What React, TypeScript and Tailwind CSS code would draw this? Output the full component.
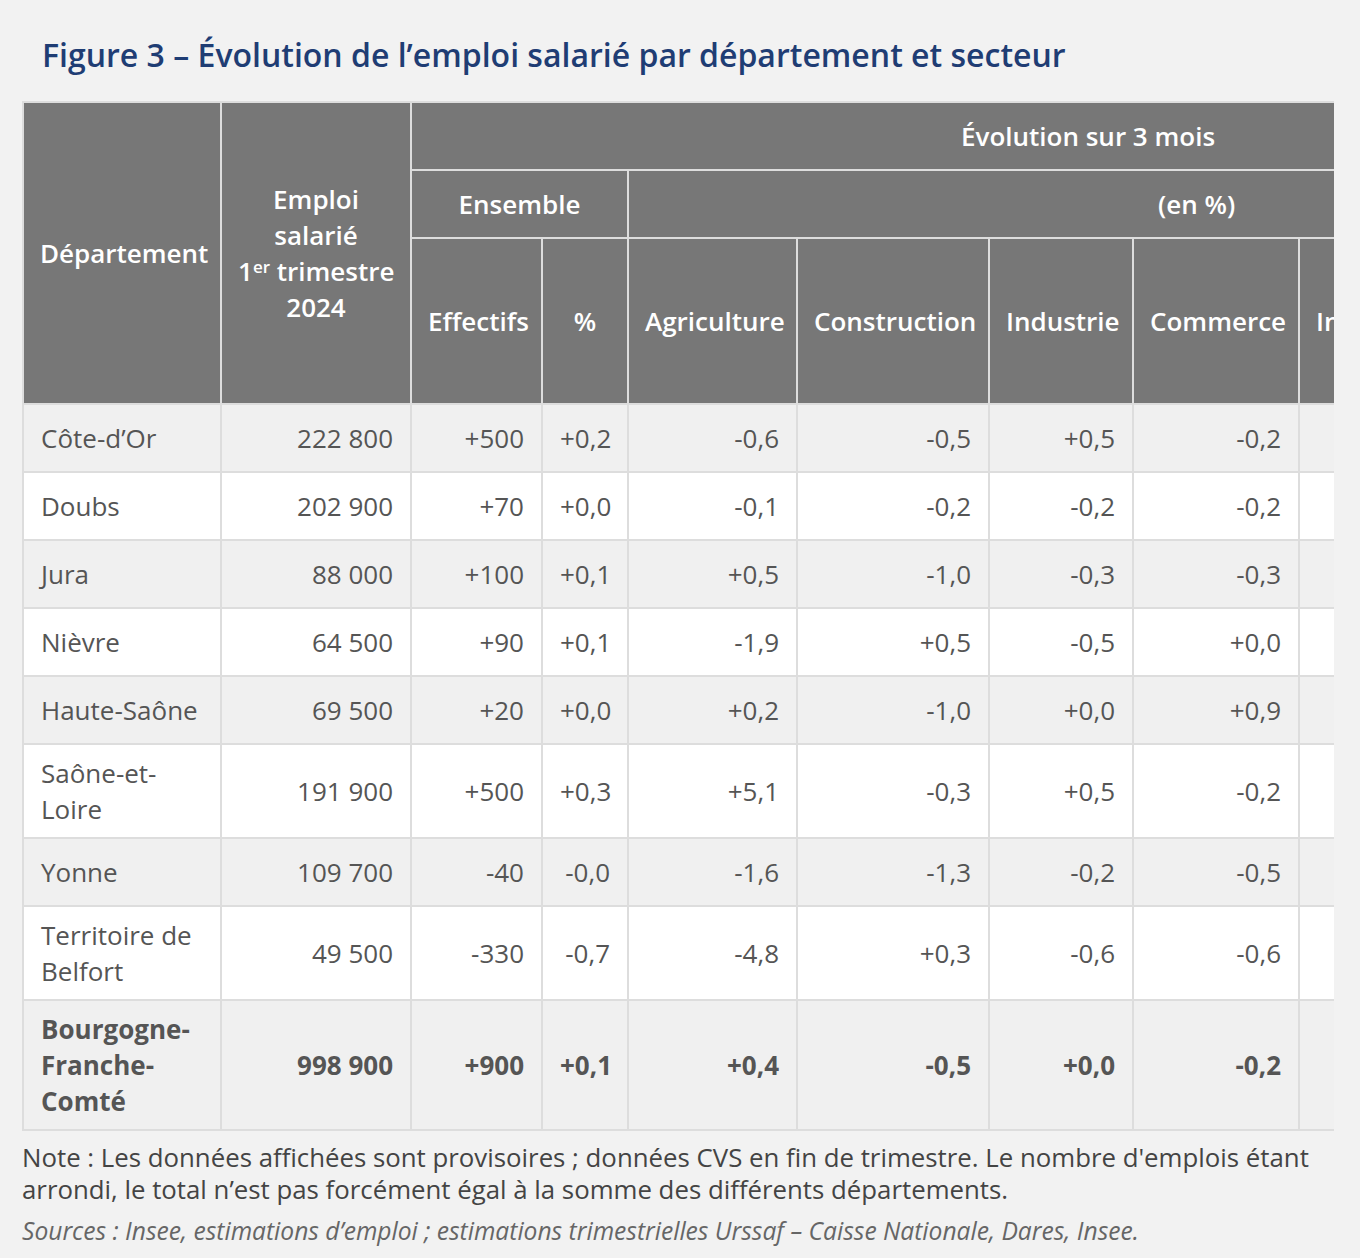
import React from "react";

type Row = {
  dept: string;
  emploi: string;
  effectifs: string;
  pct: string;
  agri: string;
  constr: string;
  indus: string;
  commerce: string;
  total?: boolean;
};

const rows: Row[] = [
  { dept: "Côte-d’Or", emploi: "222 800", effectifs: "+500", pct: "+0,2", agri: "-0,6", constr: "-0,5", indus: "+0,5", commerce: "-0,2" },
  { dept: "Doubs", emploi: "202 900", effectifs: "+70", pct: "+0,0", agri: "-0,1", constr: "-0,2", indus: "-0,2", commerce: "-0,2" },
  { dept: "Jura", emploi: "88 000", effectifs: "+100", pct: "+0,1", agri: "+0,5", constr: "-1,0", indus: "-0,3", commerce: "-0,3" },
  { dept: "Nièvre", emploi: "64 500", effectifs: "+90", pct: "+0,1", agri: "-1,9", constr: "+0,5", indus: "-0,5", commerce: "+0,0" },
  { dept: "Haute-Saône", emploi: "69 500", effectifs: "+20", pct: "+0,0", agri: "+0,2", constr: "-1,0", indus: "+0,0", commerce: "+0,9" },
  { dept: "Saône-et-Loire", emploi: "191 900", effectifs: "+500", pct: "+0,3", agri: "+5,1", constr: "-0,3", indus: "+0,5", commerce: "-0,2" },
  { dept: "Yonne", emploi: "109 700", effectifs: "-40", pct: "-0,0", agri: "-1,6", constr: "-1,3", indus: "-0,2", commerce: "-0,5" },
  { dept: "Territoire de Belfort", emploi: "49 500", effectifs: "-330", pct: "-0,7", agri: "-4,8", constr: "+0,3", indus: "-0,6", commerce: "-0,6" },
  { dept: "Bourgogne-Franche-Comté", emploi: "998 900", effectifs: "+900", pct: "+0,1", agri: "+0,4", constr: "-0,5", indus: "+0,0", commerce: "-0,2", total: true },
];

const th = "border-2 border-[#dddddd] bg-[#777777] px-[16px] py-[10px] text-center align-middle font-semibold text-white";
const td = "border-2 border-[#dddddd] px-[17px] py-[10px] align-middle";

export default function App() {
  return (
    <div className="min-h-[1258px] bg-[#f2f2f2] pl-[22px] pr-[26px] pt-[34px] font-['Open_Sans','Liberation_Sans',sans-serif] text-[26px] leading-[36px] text-[#555555]">
      <h2 className="pl-[20px] text-[32px] font-semibold leading-[42px] text-[#1f3d74]">
        Figure 3 – Évolution de l’emploi salarié par département et secteur
      </h2>

      <div className="mt-[25px] overflow-hidden">
        <table className="w-[1742px] table-fixed border-collapse">
          <colgroup>
            <col className="w-[198px]" />
            <col className="w-[190px]" />
            <col className="w-[131px]" />
            <col className="w-[86px]" />
            <col className="w-[169px]" />
            <col className="w-[192px]" />
            <col className="w-[144px]" />
            <col className="w-[166px]" />
            <col className="w-[116px]" />
            <col className="w-[174px]" />
            <col className="w-[176px]" />
          </colgroup>
          <thead>
            <tr className="h-[68px]">
              <th rowSpan={3} className={th}>
                Département
              </th>
              <th rowSpan={3} className={`${th} px-[8px]`}>
                Emploi salarié{" "}
                <span className="whitespace-nowrap">
                  1<sup className="text-[17px] leading-none">er</sup> trimestre
                </span>{" "}
                2024
              </th>
              <th colSpan={9} className={th}>
                Évolution sur 3 mois
              </th>
            </tr>
            <tr className="h-[68px]">
              <th colSpan={2} className={th}>
                Ensemble
              </th>
              <th colSpan={7} className={th}>
                (en %)
              </th>
            </tr>
            <tr className="h-[164px]">
              <th className={th}>Effectifs</th>
              <th className={th}>%</th>
              <th className={th}>Agriculture</th>
              <th className={th}>Construction</th>
              <th className={th}>Industrie</th>
              <th className={th}>Commerce</th>
              <th className={th}>Intérim</th>
              <th className={th}>Tertiaire marchand hors intérim</th>
              <th className={th}>Tertiaire non marchand</th>
            </tr>
          </thead>
          <tbody>
            {rows.map((r, i) => (
              <tr
                key={r.dept}
                className={`h-[68px] ${i % 2 === 0 ? "bg-[#f0f0f0]" : "bg-white"} ${r.total ? "font-bold" : ""}`}
              >
                <td className={`${td} text-left`}>{r.dept}</td>
                <td className={`${td} text-right`}>{r.emploi}</td>
                <td className={`${td} text-right`}>{r.effectifs}</td>
                <td className={`${td} text-right`}>{r.pct}</td>
                <td className={`${td} text-right`}>{r.agri}</td>
                <td className={`${td} text-right`}>{r.constr}</td>
                <td className={`${td} text-right`}>{r.indus}</td>
                <td className={`${td} text-right`}>{r.commerce}</td>
                <td className={`${td} text-right`}></td>
                <td className={`${td} text-right`}></td>
                <td className={`${td} text-right`}></td>
              </tr>
            ))}
          </tbody>
        </table>
      </div>

      <p className="mt-[10px] text-[25.8px] leading-[32px] text-[#444444]">
        Note : Les données affichées sont provisoires ; données CVS en fin de trimestre. Le nombre d'emplois étant
        arrondi, le total n’est pas forcément égal à la somme des différents départements.
      </p>
      <p className="mt-[10px] text-[24.6px] italic leading-[32px] text-[#666666]">
        Sources : Insee, estimations d’emploi ; estimations trimestrielles Urssaf – Caisse Nationale, Dares, Insee.
      </p>
    </div>
  );
}
